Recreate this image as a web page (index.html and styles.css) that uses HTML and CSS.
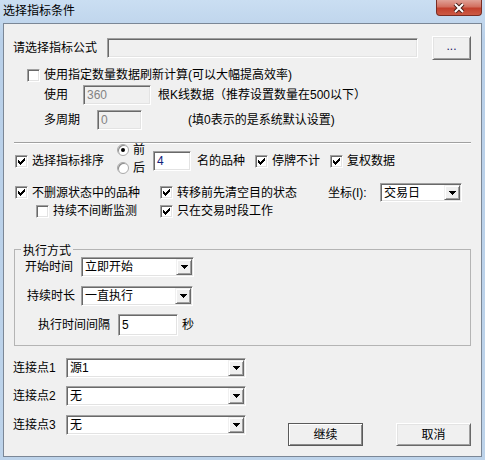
FILE: index.html
```html
<!DOCTYPE html>
<html lang="zh-CN">
<head>
    <meta charset="UTF-8">
    <title>选择指标条件</title>
    <link rel="stylesheet" href="styles.css">
</head>
<body>
<svg class="defs" width="0" height="0">
    <symbol id="chk" viewBox="0 0 7 7">
        <rect x="0" y="2" width="1" height="3"/>
        <rect x="1" y="3" width="1" height="3"/>
        <rect x="2" y="4" width="1" height="3"/>
        <rect x="3" y="3" width="1" height="3"/>
        <rect x="4" y="2" width="1" height="3"/>
        <rect x="5" y="1" width="1" height="3"/>
        <rect x="6" y="0" width="1" height="3"/>
    </symbol>
    <symbol id="arr" viewBox="0 0 7 4">
        <rect x="0" y="0" width="7" height="1"/>
        <rect x="1" y="1" width="5" height="1"/>
        <rect x="2" y="2" width="3" height="1"/>
        <rect x="3" y="3" width="1" height="1"/>
    </symbol>
</svg>
<div class="win">
    <div class="caption">
        <span class="caption_text">选择指标条件</span>
        <span class="close">
            <svg width="12" height="10" viewBox="0 0 12 10">
                <path d="M2 1 L10 9 M10 1 L2 9" stroke="#4a1f19" stroke-width="4"/>
                <path d="M2 1 L10 9 M10 1 L2 9" stroke="#fff" stroke-width="2"/>
            </svg>
        </span>
    </div>
    <div class="client">
        <!-- 指标公式 -->
        <div class="row r_formula">
            <span class="lbl_formula">请选择指标公式</span>
            <span class="edit gray edit_formula"></span>
            <span class="btn btn_dots">...</span>
        </div>
        <div class="row r_refresh">
            <span class="cb"></span>
            <span class="cb_text">使用指定数量数据刷新计算(可以大幅提高效率)</span>
        </div>
        <div class="row r_use">
            <span class="lbl_use">使用</span>
            <span class="edit gray edit_count">360</span>
            <span class="after_count">根K线数据（推荐设置数量在500以下）</span>
        </div>
        <div class="row r_period">
            <span class="lbl_period">多周期</span>
            <span class="edit gray edit_period">0</span>
            <span class="after_period">(填0表示的是系统默认设置)</span>
        </div>
        <div class="sep"></div>

        <!-- 排序 -->
        <div class="row r_sort">
            <span class="cb on"><svg width="7" height="7"><use href="#chk"/></svg></span>
            <span class="cb_text">选择指标排序</span>
            <div class="radios">
                <div class="ropt"><span class="rb on"></span><span>前</span></div>
                <div class="ropt"><span class="rb"></span><span>后</span></div>
            </div>
            <span class="edit edit_top">4</span>
            <span class="after_top">名的品种</span>
            <span class="cb on sp_stop"><svg width="7" height="7"><use href="#chk"/></svg></span>
            <span class="cb_text">停牌不计</span>
            <span class="cb on sp_adj"><svg width="7" height="7"><use href="#chk"/></svg></span>
            <span class="cb_text">复权数据</span>
        </div>

        <div class="opts r_opts1">
            <div class="cell">
                <span class="cb on"><svg width="7" height="7"><use href="#chk"/></svg></span>
                <span class="cb_text">不删源状态中的品种</span>
            </div>
            <div class="cell">
                <span class="cb on"><svg width="7" height="7"><use href="#chk"/></svg></span>
                <span class="cb_text">转移前先清空目的状态</span>
            </div>
            <span>坐标(I):</span>
            <span class="combo combo_axis"><span class="val">交易日</span><span class="drop"><svg width="7" height="4"><use href="#arr"/></svg></span></span>
        </div>
        <div class="opts r_opts2">
            <div class="cell indent">
                <span class="cb"></span>
                <span class="cb_text">持续不间断监测</span>
            </div>
            <div class="cell">
                <span class="cb on"><svg width="7" height="7"><use href="#chk"/></svg></span>
                <span class="cb_text">只在交易时段工作</span>
            </div>
        </div>

        <!-- 执行方式 -->
        <fieldset class="group">
            <legend>执行方式</legend>
            <div class="row g_start">
                <span class="lbl_start">开始时间</span>
                <span class="combo combo_start"><span class="val">立即开始</span><span class="drop"><svg width="7" height="4"><use href="#arr"/></svg></span></span>
            </div>
            <div class="row g_dur">
                <span class="lbl_dur">持续时长</span>
                <span class="combo combo_dur"><span class="val">一直执行</span><span class="drop"><svg width="7" height="4"><use href="#arr"/></svg></span></span>
            </div>
            <div class="row g_int">
                <span class="lbl_int">执行时间间隔</span>
                <span class="edit edit_int">5</span>
                <span class="after_int">秒</span>
            </div>
        </fieldset>

        <!-- 连接点 -->
        <div class="links">
            <div class="link_rows">
                <div class="link_row">
                    <span class="lbl_link">连接点1</span>
                    <span class="combo combo_link"><span class="val">源1</span><span class="drop"><svg width="7" height="4"><use href="#arr"/></svg></span></span>
                </div>
                <div class="link_row">
                    <span class="lbl_link">连接点2</span>
                    <span class="combo combo_link"><span class="val">无</span><span class="drop"><svg width="7" height="4"><use href="#arr"/></svg></span></span>
                </div>
                <div class="link_row last">
                    <span class="lbl_link">连接点3</span>
                    <span class="combo combo_link"><span class="val">无</span><span class="drop"><svg width="7" height="4"><use href="#arr"/></svg></span></span>
                </div>
            </div>
            <div class="actions">
                <span class="btn btn_main default">继续</span>
                <span class="btn btn_main">取消</span>
            </div>
        </div>
    </div>
</div>
</body>
</html>
```

FILE: styles.css
```css
* {
    box-sizing: border-box;
}

body {
    margin: 0;
    width: 485px;
    height: 460px;
    overflow: hidden;
    font: 12px/16px "Liberation Sans", "Noto Sans CJK SC", sans-serif;
    color: #000;
    background: #bed4ea;
}

.defs {
    position: absolute;
}

.win {
    width: 485px;
    height: 460px;
    display: flex;
    flex-direction: column;
    background: linear-gradient(to bottom, #cadef2, #b9d0e9 40px, #bdd3ea);
}

/* 标题栏 */
.caption {
    height: 23px;
    display: flex;
    justify-content: space-between;
    align-items: flex-start;
    padding-left: 3px;
}

.caption_text {
    line-height: 22px;
}

.close {
    width: 46px;
    height: 16px;
    margin-right: 3px;
    display: flex;
    align-items: center;
    justify-content: center;
    border: 1px solid #7a2c22;
    border-top: none;
    border-radius: 0 0 4px 4px;
    background: linear-gradient(to bottom, #e0a196, #d27060 45%, #c2402d 55%, #cc5a44);
}

.client {
    margin: 0 3px;
    height: 434px;
    border: 1px solid #7b8796;
    background: #f0f0f0;
    padding-left: 9px;
}

.row {
    display: flex;
    align-items: center;
}

/* 通用控件 */
.edit {
    height: 20px;
    display: flex;
    align-items: center;
    padding-left: 3px;
    background: #fff;
    border: 1px solid;
    border-color: #a0a0a0 #fff #fff #a0a0a0;
    box-shadow: inset 1px 1px #696969, inset -1px -1px #e3e3e3;
}

.edit.gray {
    background: #f0f0f0;
    color: #838383;
}

.combo {
    height: 20px;
    display: flex;
    align-items: stretch;
    background: #fff;
    border: 1px solid;
    border-color: #a0a0a0 #fff #fff #a0a0a0;
    box-shadow: inset 1px 1px #696969, inset -1px -1px #e3e3e3;
}

.combo .val {
    flex: 1;
    padding-left: 3px;
    display: flex;
    align-items: center;
}

.combo .drop {
    width: 16px;
    margin: 1px 1px 1px 0;
    display: flex;
    align-items: center;
    justify-content: center;
    background: #f0f0f0;
    border: 1px solid;
    border-color: #f0f0f0 #696969 #696969 #f0f0f0;
    box-shadow: inset 1px 1px #fff, inset -1px -1px #a0a0a0;
}

.btn {
    display: flex;
    align-items: center;
    justify-content: center;
    background: #f0f0f0;
    border: 1px solid;
    border-color: #fff #696969 #696969 #fff;
    box-shadow: inset 1px 1px #e3e3e3, inset -1px -1px #a0a0a0;
}

.btn.default {
    border-color: #5a5a5a;
    box-shadow: inset 1px 1px #fff, inset -1px -1px #8a8a8a;
}

.cb {
    width: 13px;
    height: 13px;
    flex: none;
    display: flex;
    align-items: center;
    justify-content: center;
    background: #fff;
    border: 1px solid;
    border-color: #a0a0a0 #fff #fff #a0a0a0;
    box-shadow: inset 1px 1px #696969, inset -1px -1px #e3e3e3;
}

.cb_text {
    margin-left: 4px;
}

.rb {
    width: 12px;
    height: 12px;
    flex: none;
    border-radius: 50%;
    display: flex;
    align-items: center;
    justify-content: center;
    background: #fff;
    border: 1px solid #a9a9a9;
    box-shadow: inset 1px 1px #8c8c8c;
}

.rb.on:after {
    content: "";
    width: 4px;
    height: 4px;
    border-radius: 50%;
    background: #000;
}

/* 公式与刷新 */
.r_formula {
    height: 25px;
    margin-top: 11px;
}

.lbl_formula {
    width: 94px;
}

.edit_formula {
    width: 311px;
}

.btn_dots {
    width: 39px;
    height: 24px;
    margin-left: 14px;
    padding-bottom: 4px;
    color: #1c1464;
}

.r_refresh {
    height: 18px;
    margin-top: 6px;
    margin-left: 14px;
}

.r_use {
    height: 20px;
    margin-top: 1px;
    margin-left: 31px;
}

.lbl_use {
    width: 39px;
}

.edit_count {
    width: 68px;
}

.after_count {
    margin-left: 7px;
}

.r_period {
    height: 20px;
    margin-top: 5px;
    margin-left: 31px;
}

.lbl_period {
    width: 53px;
}

.edit_period {
    width: 45px;
}

.after_period {
    margin-left: 46px;
}

.sep {
    margin: 12px 0 0 1px;
    width: 457px;
    height: 2px;
    border-top: 1px solid #a0a0a0;
    border-bottom: 1px solid #fff;
}

/* 排序 */
.r_sort {
    height: 28px;
    margin-top: 3px;
    margin-left: 2px;
}

.radios {
    display: flex;
    flex-direction: column;
    margin: 0 0 4px 13px;
}

.ropt {
    height: 18px;
    display: flex;
    align-items: center;
    gap: 4px;
}

.edit_top {
    width: 38px;
    margin-left: 8px;
    color: #10207a;
}

.after_top {
    margin-left: 6px;
}

.sp_stop,
.sp_adj {
    margin-left: 10px;
}

.opts {
    display: grid;
    grid-template-columns: 145px 168px 52px 82px;
    align-items: center;
    margin-left: 2px;
}

.opts .cell {
    display: flex;
    align-items: center;
}

.opts .cell.indent {
    padding-left: 21px;
}

.r_opts1 {
    height: 19px;
    margin-top: 8px;
}

.r_opts2 {
    height: 18px;
}

.combo_axis {
    height: 19px;
}

/* 执行方式 */
.group {
    margin: 21px 0 0 1px;
    width: 457px;
    min-width: 0;
    padding: 0 0 9px 0;
    border: 1px solid #b4b4b4;
}

.group legend {
    margin-left: 6px;
    padding: 4px 2px 0;
    line-height: 12px;
}

.g_start {
    height: 20px;
    margin-left: 10px;
}

.lbl_start {
    width: 56px;
}

.combo_start {
    width: 113px;
}

.g_dur {
    height: 20px;
    margin-top: 9px;
    margin-left: 12px;
}

.lbl_dur {
    width: 54px;
}

.combo_dur {
    width: 112px;
}

.g_int {
    height: 22px;
    margin-top: 8px;
    margin-left: 23px;
}

.lbl_int {
    width: 80px;
}

.edit_int {
    width: 60px;
    height: 22px;
}

.after_int {
    margin-left: 4px;
}

/* 连接点 */
.links {
    display: flex;
    margin-top: 12px;
}

.link_rows {
    display: flex;
    flex-direction: column;
    gap: 8px;
}

.link_row {
    height: 20px;
    display: flex;
    align-items: center;
}

.link_row.last {
    margin-top: 1px;
}

.lbl_link {
    width: 53px;
}

.combo_link {
    width: 180px;
}

.actions {
    display: flex;
    gap: 33px;
    margin: 65px 0 0 42px;
}

.btn_main {
    width: 75px;
    height: 23px;
}
```
